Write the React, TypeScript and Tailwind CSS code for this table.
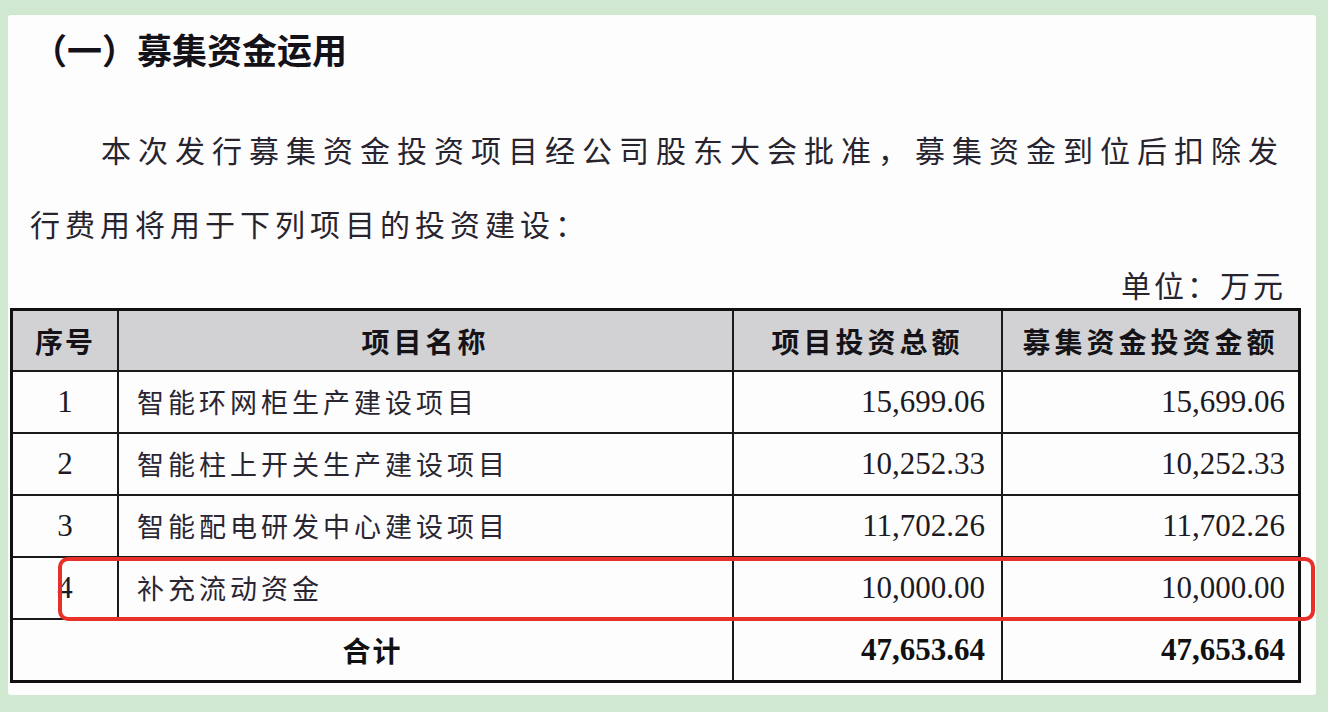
const CJK = "font-['Noto_Sans_CJK_SC',sans-serif]"
const NUM = "font-['Liberation_Serif','Times_New_Roman',serif]"

const ROWS = [
  { no: '1', name: '智能环网柜生产建设项目', total: '15,699.06', raised: '15,699.06' },
  { no: '2', name: '智能柱上开关生产建设项目', total: '10,252.33', raised: '10,252.33' },
  { no: '3', name: '智能配电研发中心建设项目', total: '11,702.26', raised: '11,702.26' },
  { no: '4', name: '补充流动资金', total: '10,000.00', raised: '10,000.00' },
]

const GRID = 'grid grid-cols-[106px_615px_269px_295px]'

export default function App() {
  return (
    <div className="w-[1328px] h-[712px] bg-[#cfe8cf] pt-[15px] pl-[8px] overflow-hidden">
      <div className="w-[1308px] h-[680px] bg-[#fdfdfe] rounded-[3px]">
        {/* 标题 */}
        <h1 className={`${CJK} pt-[14px] pl-[24px] text-[35px] leading-[40px] font-bold text-[#141218]`}>
          （一）募集资金运用
        </h1>

        {/* 正文 */}
        <div className={`${CJK} text-[30px] leading-[40px] text-[#28242e]`}>
          <p className="mt-[60px] pl-[93px] tracking-[7px] whitespace-nowrap">
            本次发行募集资金投资项目经公司股东大会批准，募集资金到位后扣除发
          </p>
          <p className="mt-[34px] pl-[22px] tracking-[5px] whitespace-nowrap">
            行费用将用于下列项目的投资建设：
          </p>
          <p className="mt-[21px] pr-[30px] text-right tracking-[3px]">单位：万元</p>
        </div>

        {/* 表格 */}
        <div className="relative mt-[4px] ml-[2px] w-[1291px]">
          <div className="border-[3px] border-[#111]">
            <div className={`${GRID} h-[61px] bg-[#d2d2d4] border-b-2 border-[#1a1a1a] ${CJK} text-[28px] font-bold text-[#151318]`}>
              <div className="flex items-center justify-center border-r-2 border-[#1a1a1a] tracking-[2px]">序号</div>
              <div className="flex items-center justify-center border-r-2 border-[#1a1a1a] tracking-[4px]">项目名称</div>
              <div className="flex items-center justify-center border-r-2 border-[#1a1a1a] tracking-[4px]">项目投资总额</div>
              <div className="flex items-center justify-center tracking-[4px]">募集资金投资金额</div>
            </div>

            {ROWS.map((r) => (
              <div key={r.no} className={`${GRID} h-[62px] border-b-2 border-[#1a1a1a] text-[#1c1a22]`}>
                <div className={`flex items-center justify-center border-r-2 border-[#1a1a1a] ${NUM} text-[31px]`}>{r.no}</div>
                <div className={`flex items-center pl-[18px] border-r-2 border-[#1a1a1a] ${CJK} text-[27px] tracking-[4px] text-[#2a2632]`}>{r.name}</div>
                <div className={`flex items-center justify-end pr-[16px] border-r-2 border-[#1a1a1a] ${NUM} text-[31px]`}>{r.total}</div>
                <div className={`flex items-center justify-end pr-[13px] ${NUM} text-[31px]`}>{r.raised}</div>
              </div>
            ))}

            <div className={`${GRID} h-[60px] text-[#111]`}>
              <div className={`col-span-2 flex items-center justify-center border-r-2 border-[#1a1a1a] ${CJK} text-[28px] font-bold tracking-[2px]`}>合计</div>
              <div className={`flex items-center justify-end pr-[16px] border-r-2 border-[#1a1a1a] ${NUM} text-[31px] font-bold`}>47,653.64</div>
              <div className={`flex items-center justify-end pr-[13px] ${NUM} text-[31px] font-bold`}>47,653.64</div>
            </div>
          </div>

          {/* 红框标注 */}
          <div className="absolute left-[48px] top-[249px] w-[1257px] h-[64px] border-[4px] border-[#e8302a] rounded-[10px] pointer-events-none" />
        </div>
      </div>
    </div>
  )
}
